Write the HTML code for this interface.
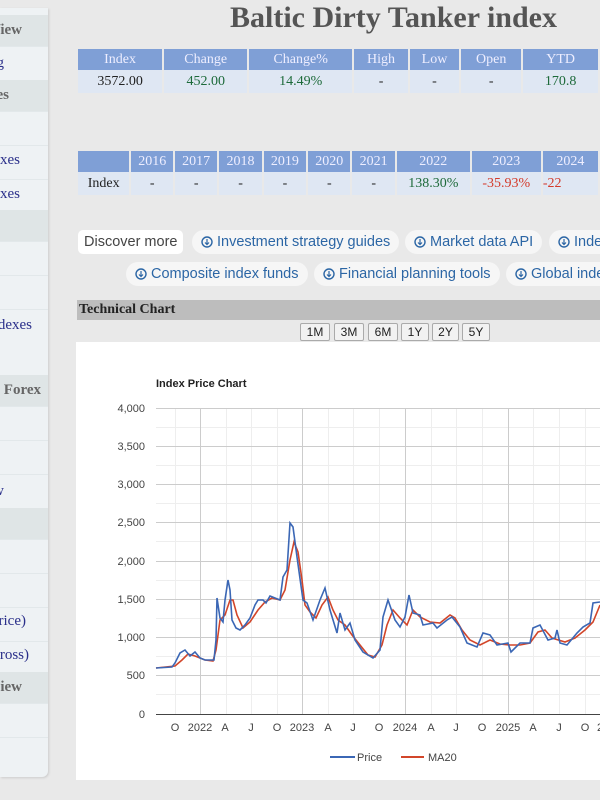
<!DOCTYPE html>
<html><head><meta charset="utf-8"><style>
*{margin:0;padding:0;box-sizing:border-box}
html,body{width:600px;height:800px;overflow:hidden}
body{background:#e9e9e9;position:relative;font-family:"Liberation Sans",sans-serif}
.abs{position:absolute}
.sb{left:0;top:8px;width:48px;height:769px;background:#eef2f4;border-radius:0 0 6px 0;box-shadow:1px 1px 2px #ccc;overflow:hidden}
.sh{position:absolute;left:0;width:48px;height:31px;background:#dfe5e6;font-family:"Liberation Serif",serif;font-weight:bold;color:#666;font-size:15px;line-height:31px;white-space:nowrap}
.si{position:absolute;left:0;width:48px;border-top:1px solid #e2e8ea;font-family:"Liberation Serif",serif;color:#2a2f8a;font-size:15px;white-space:nowrap}
.si span,.sh span{position:absolute}
table{border-collapse:separate;border-spacing:2px 0;font-family:"Liberation Serif",serif;font-size:14px;position:absolute}
th{background:#7f9fd6;color:#eef;font-weight:normal;height:21px;text-align:center}
td{background:#dfe7f3;height:23px;text-align:center;color:#222}
.g{color:#1d6a3a}.r{color:#d43a2a}
.pill{position:absolute;height:24px;border-radius:12px;background:#f6f6f6;color:#2c66a5;font-size:14.5px;line-height:24px;padding:0 9px;white-space:nowrap}
.pill svg{display:inline-block;vertical-align:-2px;margin-right:4px}
.rb{position:absolute;top:323px;height:18px;border:1px solid #aaa;background:#f2f2f2;font-size:12px;line-height:16px;text-align:center;color:#222;border-radius:2px}
</style></head><body>
<div class="abs sb">
<div class="sh" style="top:7px"><span style="right:26px">View</span></div>
<div class="si" style="top:38px;height:35px"><span style="top:8px;right:44px">ing</span></div>
<div class="sh" style="top:72px"><span style="right:39px">xes</span></div>
<div class="si" style="top:103px;height:34px"></div>
<div class="si" style="top:137px;height:34px"><span style="top:6px;right:28px">dexes</span></div>
<div class="si" style="top:171px;height:34px"><span style="top:6px;right:28px">dexes</span></div>
<div class="sh" style="top:202px"></div>
<div class="si" style="top:233px;height:34px"></div>
<div class="si" style="top:267px;height:34px"></div>
<div class="si" style="top:301px;height:66px"><span style="top:7px;right:16px">ndexes</span></div>
<div class="sh" style="top:367px"><span style="right:7px">Forex</span></div>
<div class="si" style="top:398px;height:34px"></div>
<div class="si" style="top:432px;height:34px"></div>
<div class="si" style="top:466px;height:34px"><span style="top:8px;right:44px">w</span></div>
<div class="sh" style="top:500px"></div>
<div class="si" style="top:531px;height:34px"></div>
<div class="si" style="top:565px;height:34px"></div>
<div class="si" style="top:599px;height:34px"><span style="top:5px;right:22px">rice)</span></div>
<div class="si" style="top:633px;height:31px"><span style="top:5px;right:19px">ross)</span></div>
<div class="sh" style="top:664px"><span style="right:26px">iew</span></div>
<div class="si" style="top:695px;height:34px"></div>
<div class="si" style="top:729px;height:40px"></div>
</div>

<div class="abs" style="left:230px;top:1px;font-family:'Liberation Serif',serif;font-weight:bold;font-size:30px;color:#555;white-space:nowrap">Baltic Dirty Tanker index</div>

<table style="left:76px;top:49px">
<tr><th style="width:89px">Index</th><th style="width:88px">Change</th><th style="width:109px">Change%</th><th style="width:57px">High</th><th style="width:52px">Low</th><th style="width:64px">Open</th><th style="width:80px">YTD</th></tr>
<tr><td>3572.00</td><td class="g">452.00</td><td class="g">14.49%</td><td>-</td><td>-</td><td>-</td><td class="g">170.8</td></tr>
</table>

<table style="left:76px;top:151px">
<tr><th style="width:55px"></th><th style="width:44px">2016</th><th style="width:45px">2017</th><th style="width:45px">2018</th><th style="width:45px">2019</th><th style="width:45px">2020</th><th style="width:45px">2021</th><th style="width:77px">2022</th><th style="width:73px">2023</th><th style="width:60px">2024</th></tr>
<tr><td>Index</td><td>-</td><td>-</td><td>-</td><td>-</td><td>-</td><td>-</td><td class="g">138.30%</td><td class="r">-35.93%</td><td class="r" style="text-align:left">-22</td></tr>
</table>

<div class="pill" style="left:78px;top:230px;background:#fff;color:#444;border-radius:5px;padding:0 6px">Discover more</div>
<div class="pill" style="left:192px;top:230px"><svg width="12" height="12" viewBox="0 0 12 12"><circle cx="6" cy="6" r="5" fill="none" stroke="#2c66a5" stroke-width="1.4"/><path d="M6 3V8M4 6.5L6 8.5L8 6.5" fill="none" stroke="#2c66a5" stroke-width="1.2"/></svg>Investment strategy guides</div>
<div class="pill" style="left:405px;top:230px"><svg width="12" height="12" viewBox="0 0 12 12"><circle cx="6" cy="6" r="5" fill="none" stroke="#2c66a5" stroke-width="1.4"/><path d="M6 3V8M4 6.5L6 8.5L8 6.5" fill="none" stroke="#2c66a5" stroke-width="1.2"/></svg>Market data API</div>
<div class="pill" style="left:549px;top:230px"><svg width="12" height="12" viewBox="0 0 12 12"><circle cx="6" cy="6" r="5" fill="none" stroke="#2c66a5" stroke-width="1.4"/><path d="M6 3V8M4 6.5L6 8.5L8 6.5" fill="none" stroke="#2c66a5" stroke-width="1.2"/></svg>Index funds</div>
<div class="pill" style="left:126px;top:262px"><svg width="12" height="12" viewBox="0 0 12 12"><circle cx="6" cy="6" r="5" fill="none" stroke="#2c66a5" stroke-width="1.4"/><path d="M6 3V8M4 6.5L6 8.5L8 6.5" fill="none" stroke="#2c66a5" stroke-width="1.2"/></svg>Composite index funds</div>
<div class="pill" style="left:314px;top:262px"><svg width="12" height="12" viewBox="0 0 12 12"><circle cx="6" cy="6" r="5" fill="none" stroke="#2c66a5" stroke-width="1.4"/><path d="M6 3V8M4 6.5L6 8.5L8 6.5" fill="none" stroke="#2c66a5" stroke-width="1.2"/></svg>Financial planning tools</div>
<div class="pill" style="left:506px;top:262px"><svg width="12" height="12" viewBox="0 0 12 12"><circle cx="6" cy="6" r="5" fill="none" stroke="#2c66a5" stroke-width="1.4"/><path d="M6 3V8M4 6.5L6 8.5L8 6.5" fill="none" stroke="#2c66a5" stroke-width="1.2"/></svg>Global indexes</div>

<div class="abs" style="left:77px;top:300px;width:523px;height:20px;background:#bdbdbd;font-family:'Liberation Serif',serif;font-weight:bold;font-size:14px;line-height:20px;padding-left:2px;color:#222">Technical Chart</div>
<div class="rb" style="left:300px;width:30px">1M</div>
<div class="rb" style="left:334px;width:30px">3M</div>
<div class="rb" style="left:368px;width:30px">6M</div>
<div class="rb" style="left:401px;width:28px">1Y</div>
<div class="rb" style="left:432px;width:27px">2Y</div>
<div class="rb" style="left:462px;width:28px">5Y</div>

<div class="abs" style="left:76px;top:342px;width:524px;height:438px;background:#fff"></div>
<svg class="abs" style="left:0;top:0" width="600" height="800" font-family="Liberation Sans, sans-serif">
<g stroke="#eee" stroke-width="1">
<path d="M156 446.5H600M156 465.5H600M156 484.5H600M156 503.5H600M156 522.5H600M156 541.5H600M156 561.5H600M156 580.5H600M156 599.5H600M156 618.5H600M156 637.5H600M156 656.5H600M156 675.5H600M156 694.5H600M156 427.5H600"/>
<path d="M175.5 408V714M226.5 408V714M251.5 408V714M277.5 408V714M328.5 408V714M353.5 408V714M379.5 408V714M431.5 408V714M456.5 408V714M482.5 408V714M533.5 408V714M559.5 408V714M585.5 408V714"/>
</g>
<g stroke="#ccc" stroke-width="1">
<path d="M156 408.5H600M156 446.5H600M156 484.5H600M156 522.5H600M156 561.5H600M156 599.5H600M156 637.5H600M156 675.5H600"/>
<path d="M200.5 408V714M302.5 408V714M405.5 408V714M508.5 408V714"/>
</g>
<path d="M156 714.5H600" stroke="#444" stroke-width="1"/>
<g font-size="11" fill="#444" text-anchor="end">
<text x="145" y="412">4,000</text><text x="145" y="450">3,500</text><text x="145" y="488">3,000</text><text x="145" y="526">2,500</text><text x="145" y="565">2,000</text><text x="145" y="603">1,500</text><text x="145" y="641">1,000</text><text x="145" y="679">500</text><text x="145" y="718">0</text>
</g>
<g font-size="11" fill="#444" text-anchor="middle">
<text x="175" y="731">O</text><text x="200" y="731">2022</text><text x="225" y="731">A</text><text x="251" y="731">J</text><text x="277" y="731">O</text><text x="302" y="731">2023</text><text x="328" y="731">A</text><text x="353" y="731">J</text><text x="379" y="731">O</text><text x="405" y="731">2024</text><text x="431" y="731">A</text><text x="456" y="731">J</text><text x="482" y="731">O</text><text x="508" y="731">2025</text><text x="533" y="731">A</text><text x="559" y="731">J</text><text x="585" y="731">O</text><text x="600" y="731">2</text>
</g>
<text x="156" y="387" font-size="11" font-weight="bold" fill="#222">Index Price Chart</text>
<polyline fill="none" stroke="#d2462a" stroke-width="1.6" points="156,668 175,666 182,660 188,654 195,656 205,660 213,661 216,650 220,620 225,615 230,600 233,600 237,615 243,628 250,622 258,610 265,602 272,598 280,600 285,590 290,560 294,542 298,552 302,580 305,605 310,612 316,618 322,605 328,597 333,610 338,620 345,625 352,635 360,645 368,655 375,657 382,645 387,625 393,610 400,618 407,625 413,610 420,617 430,622 440,623 450,615 455,618 462,630 470,640 480,645 490,640 500,644 510,645 520,645 530,643 538,632 545,630 552,638 565,642 575,638 585,630 593,622 600,605"/>
<polyline fill="none" stroke="#3b67b5" stroke-width="1.6" points="156,668 172,667 175,663 180,653 185,650 190,656 195,652 200,658 205,660 214,660 216,640 217,598 220,618 223,622 225,600 228,580 230,590 232,620 236,628 240,630 245,625 250,618 255,605 258,600 263,600 266,603 270,596 275,598 280,600 283,577 287,570 290,523 293,527 297,557 303,600 307,603 313,620 320,600 325,588 330,610 337,633 340,613 345,630 350,623 355,640 363,652 373,658 380,650 383,617 388,600 395,620 400,627 405,617 409,595 413,613 420,615 423,625 433,623 437,628 447,620 452,617 460,627 467,643 477,647 483,633 490,635 497,645 508,643 511,652 520,643 530,643 533,628 540,625 548,640 555,638 557,630 560,643 567,645 577,633 583,627 590,623 593,603 600,602"/>
<path d="M330 757H355" stroke="#3b67b5" stroke-width="2"/><text x="357" y="761" font-size="11" fill="#444">Price</text>
<path d="M401 757H424" stroke="#d2462a" stroke-width="2"/><text x="428" y="761" font-size="11" fill="#444">MA20</text>
</svg>
</body></html>
